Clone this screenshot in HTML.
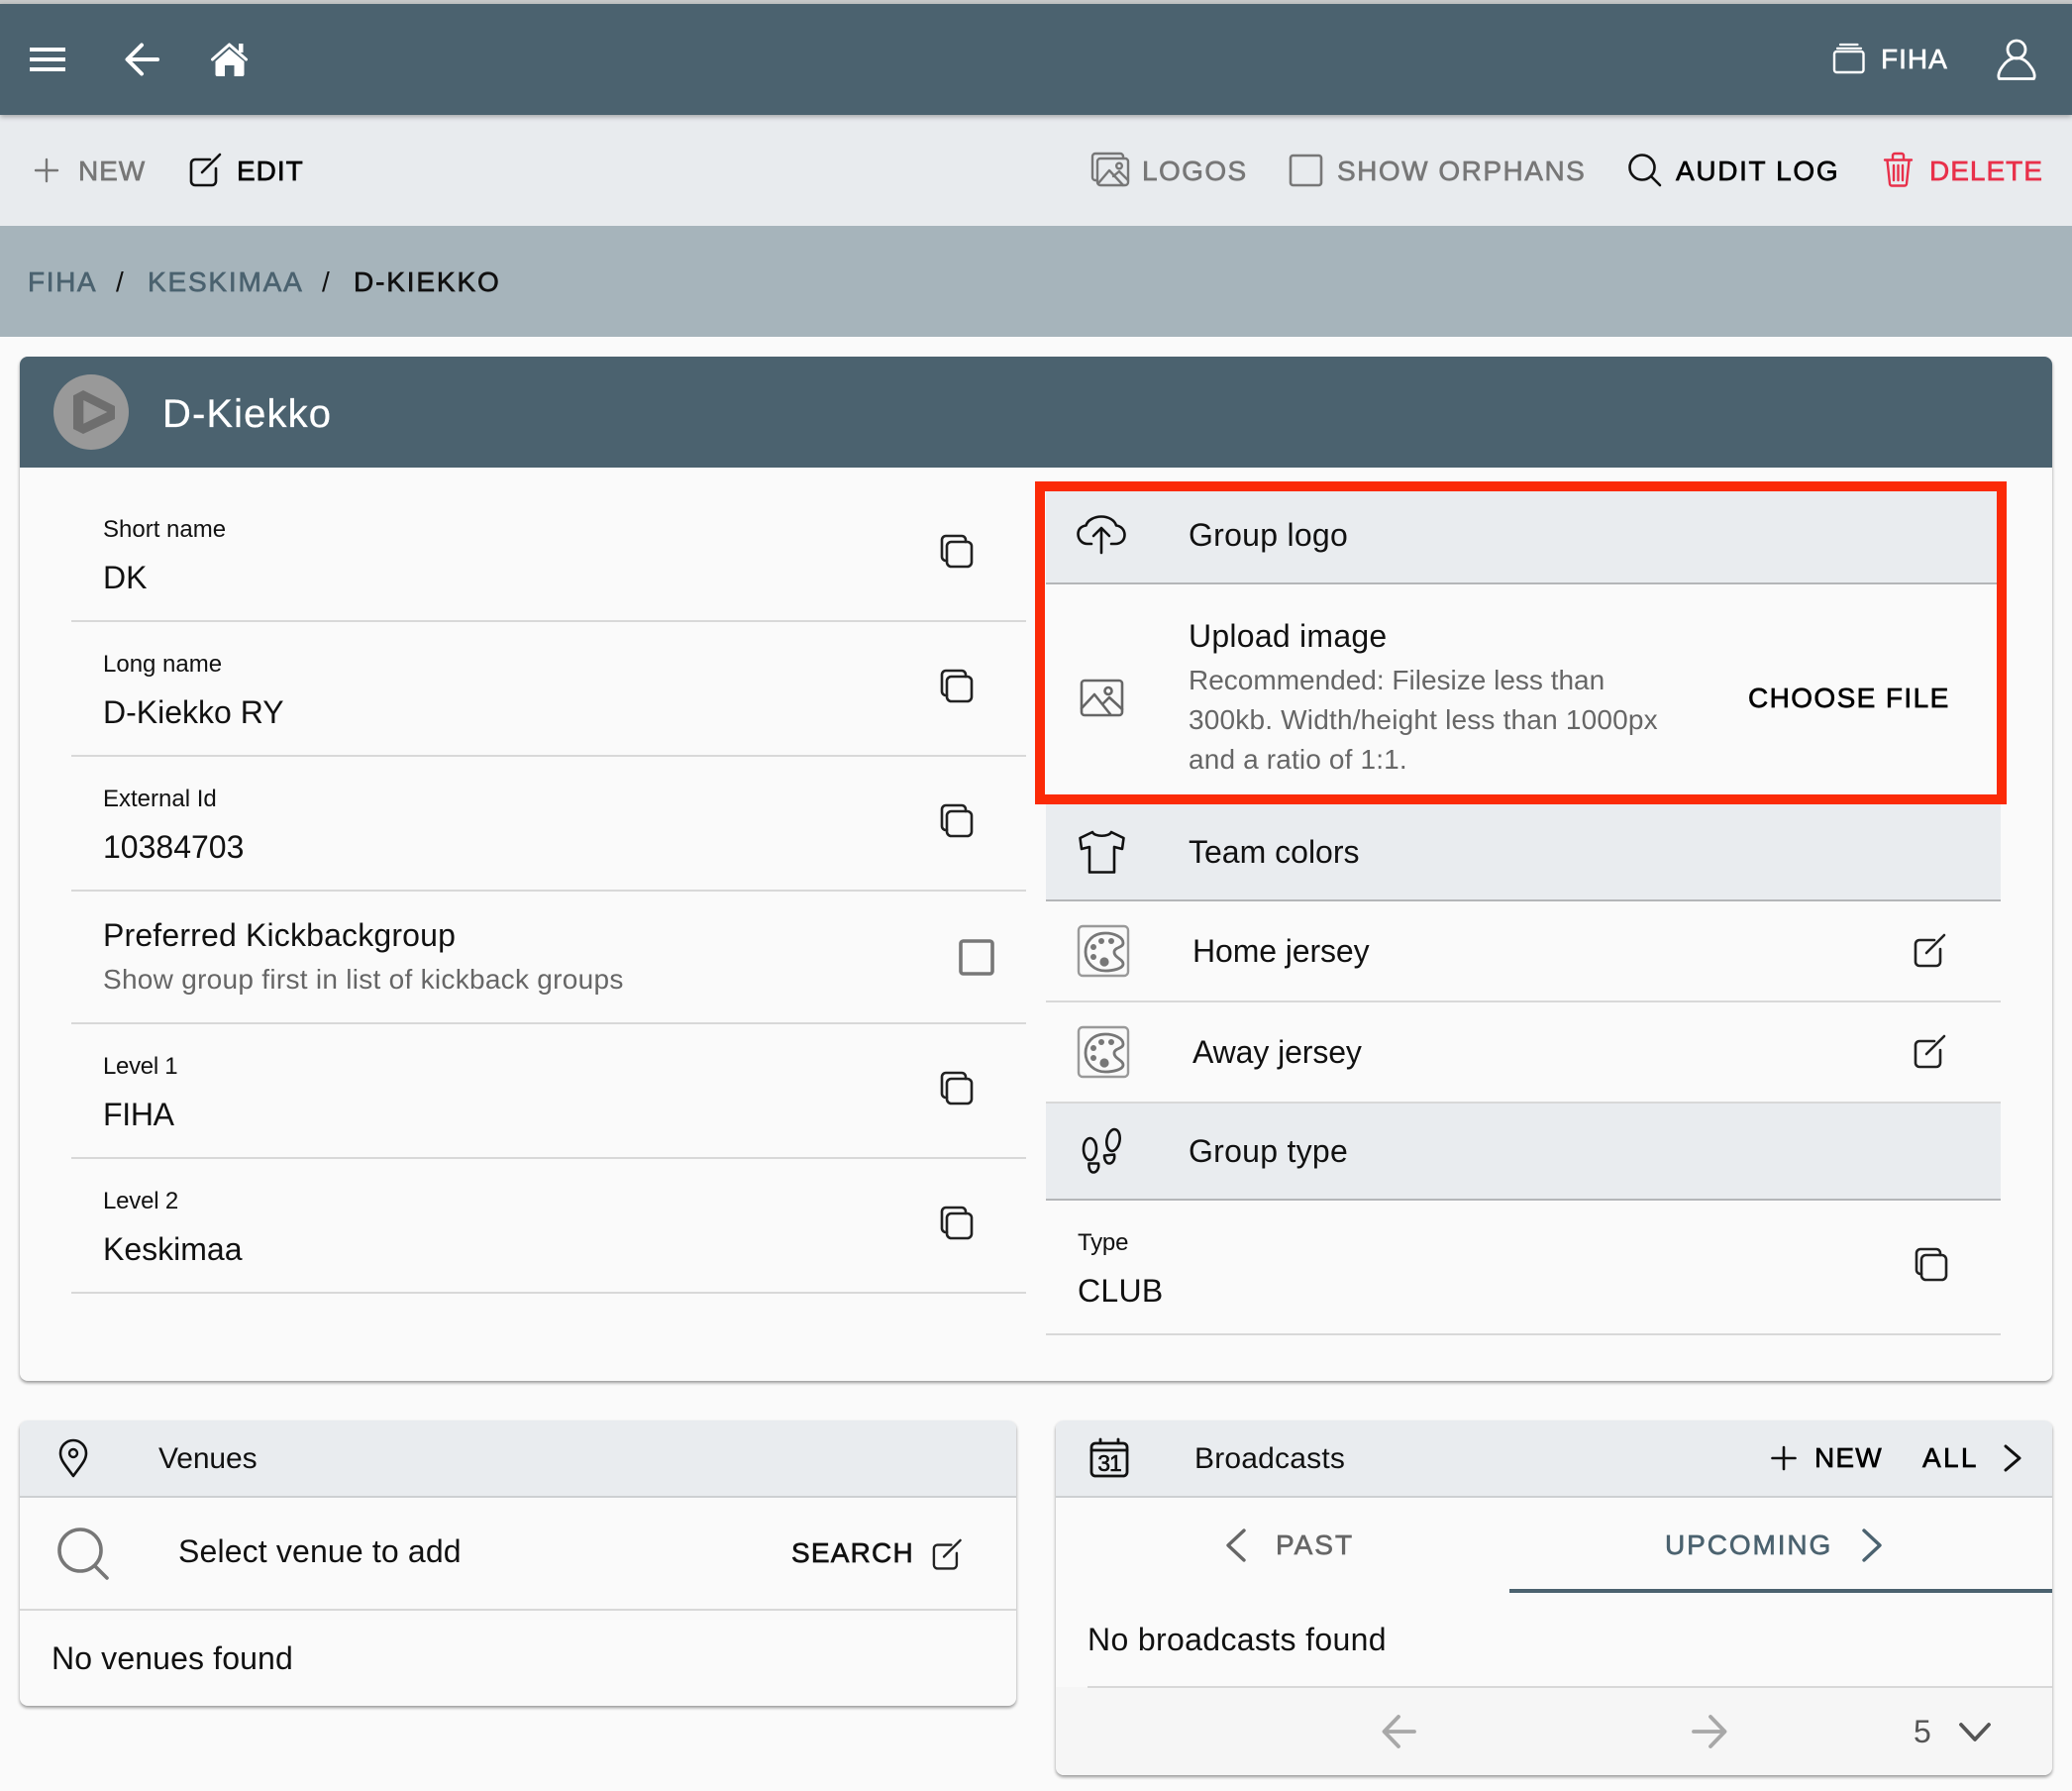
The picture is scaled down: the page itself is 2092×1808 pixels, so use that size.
<!DOCTYPE html>
<html><head><meta charset="utf-8"><style>
*{box-sizing:border-box}
html,body{margin:0;padding:0;width:2092px;height:1808px;overflow:hidden;background:#fafafa;font-family:"Liberation Sans",sans-serif;color:#111}
.b{position:absolute}
.t{position:absolute;white-space:nowrap;line-height:40px;height:40px;font-size:32px}
.s{font-size:24px}
.d{font-size:28px;color:#666}
.m{font-size:28px;letter-spacing:1.4px;-webkit-text-stroke:.65px currentColor}
.g{color:#777}
.l{position:absolute;height:2px;background:#d8d8d8}
.h{position:absolute;background:#e9ecef}
svg{position:absolute;left:0;top:0}
</style></head><body>
<div class="b" style="left:0;top:0;width:2092px;height:4px;background:#c6c8c8"></div>
<div class="b" style="left:0;top:116px;width:2092px;height:112px;background:#e8ebee"></div>
<div class="b" style="left:0;top:4px;width:2092px;height:112px;background:#4b626f;box-shadow:0 2px 5px rgba(0,0,0,.3)"></div>
<div class="b" style="left:0;top:228px;width:2092px;height:112px;background:#a6b4bb"></div>

<div class="b" style="left:20px;top:360px;width:2052px;height:1034px;background:#fafafa;border-radius:8px;box-shadow:0 2px 3px rgba(0,0,0,.4)"></div>
<div class="b" style="left:20px;top:360px;width:2052px;height:112px;background:#4b626f;border-radius:8px 8px 0 0"></div>

<div class="h" style="left:1056px;top:490px;width:964px;height:98px"></div><div class="l" style="left:1056px;top:588px;width:964px;background:#b4b6b8"></div>
<div class="h" style="left:1056px;top:812px;width:964px;height:96px"></div><div class="l" style="left:1056px;top:908px;width:964px;background:#b4b6b8"></div>
<div class="l" style="left:1056px;top:1010px;width:964px"></div>
<div class="h" style="left:1056px;top:1112px;width:964px;height:98px"></div><div class="l" style="left:1056px;top:1112px;width:964px"></div><div class="l" style="left:1056px;top:1210px;width:964px;background:#b4b6b8"></div>
<div class="l" style="left:1056px;top:1346px;width:964px"></div>
<div class="l" style="left:72px;top:626px;width:964px"></div>
<div class="l" style="left:72px;top:762px;width:964px"></div>
<div class="l" style="left:72px;top:898px;width:964px"></div>
<div class="l" style="left:72px;top:1032px;width:964px"></div>
<div class="l" style="left:72px;top:1168px;width:964px"></div>
<div class="l" style="left:72px;top:1304px;width:964px"></div>

<div class="b" style="left:1045px;top:486px;width:981px;height:326px;border:10px solid #fb2a07"></div>

<div class="b" style="left:20px;top:1434px;width:1006px;height:288px;background:#fafafa;border-radius:8px;box-shadow:0 2px 3px rgba(0,0,0,.4)"></div>
<div class="h" style="left:20px;top:1434px;width:1006px;height:77px;border-radius:8px 8px 0 0"></div><div class="l" style="left:20px;top:1510px;width:1006px;background:#cdd0d2"></div>
<div class="l" style="left:20px;top:1624px;width:1006px"></div>

<div class="b" style="left:1066px;top:1434px;width:1006px;height:358px;background:#fafafa;border-radius:8px;box-shadow:0 2px 3px rgba(0,0,0,.4)"></div>
<div class="h" style="left:1066px;top:1434px;width:1006px;height:77px;border-radius:8px 8px 0 0"></div><div class="l" style="left:1066px;top:1510px;width:1006px;background:#cdd0d2"></div>
<div class="b" style="left:1524px;top:1604px;width:548px;height:4px;background:#4b626f"></div>
<div class="b" style="left:1066px;top:1703px;width:1006px;height:89px;background:#f6f6f6;border-radius:0 0 8px 8px"></div>
<div class="l" style="left:1098px;top:1702px;width:974px"></div>

<div class="t m" style="left:1899px;top:40px;color:#fff;letter-spacing:1px">FIHA</div>
<div class="t m g" style="left:79px;top:153px;letter-spacing:.9px">NEW</div>
<div class="t m" style="left:239px;top:153px;color:#000;letter-spacing:1px">EDIT</div>
<div class="t m g" style="left:1153px;top:153px">LOGOS</div>
<div class="t m g" style="left:1350px;top:153px;letter-spacing:1.5px">SHOW ORPHANS</div>
<div class="t m" style="left:1692px;top:153px;color:#000;letter-spacing:1.65px">AUDIT LOG</div>
<div class="t m" style="left:1948px;top:153px;color:#e8304a;letter-spacing:1px">DELETE</div>

<div class="t m" style="left:28px;top:265px;color:#4b626f;letter-spacing:1.6px">FIHA</div>
<div class="t m" style="left:117px;top:265px;color:#111;-webkit-text-stroke:0">/</div>
<div class="t m" style="left:149px;top:265px;color:#4b626f;letter-spacing:1.8px">KESKIMAA</div>
<div class="t m" style="left:325px;top:265px;color:#111;-webkit-text-stroke:0">/</div>
<div class="t m" style="left:357px;top:265px;color:#111;letter-spacing:1.85px">D-KIEKKO</div>

<div class="t" style="left:164px;top:398px;font-size:40px;color:#fff;letter-spacing:1.1px;-webkit-text-stroke:.25px #fff">D-Kiekko</div>

<div class="t s" style="left:104px;top:515px">Short name</div><div class="t" style="left:104px;top:563px">DK</div>
<div class="t s" style="left:104px;top:651px">Long name</div><div class="t" style="left:104px;top:699px">D-Kiekko RY</div>
<div class="t s" style="left:104px;top:787px">External Id</div><div class="t" style="left:104px;top:835px">10384703</div>
<div class="t" style="left:104px;top:924px;letter-spacing:.17px">Preferred Kickbackgroup</div><div class="t d" style="left:104px;top:969px;letter-spacing:.28px">Show group first in list of kickback groups</div>
<div class="t s" style="left:104px;top:1057px;letter-spacing:-.3px">Level 1</div><div class="t" style="left:104px;top:1105px;letter-spacing:-.3px">FIHA</div>
<div class="t s" style="left:104px;top:1193px;letter-spacing:-.2px">Level 2</div><div class="t" style="left:104px;top:1241px">Keskimaa</div>

<div class="t" style="left:1200px;top:520px;letter-spacing:.27px">Group logo</div>
<div class="t" style="left:1200px;top:622px;letter-spacing:.25px">Upload image</div>
<div class="t d" style="left:1200px;top:667px">Recommended: Filesize less than</div>
<div class="t d" style="left:1200px;top:707px;letter-spacing:.19px">300kb. Width/height less than 1000px</div>
<div class="t d" style="left:1200px;top:747px;letter-spacing:.15px">and a ratio of 1:1.</div>
<div class="t m" style="left:1765px;top:685px;color:#000">CHOOSE FILE</div>
<div class="t" style="left:1200px;top:840px">Team colors</div>
<div class="t" style="left:1204px;top:940px;letter-spacing:-.1px">Home jersey</div>
<div class="t" style="left:1204px;top:1042px;letter-spacing:-.1px">Away jersey</div>
<div class="t" style="left:1200px;top:1142px;letter-spacing:.27px">Group type</div>
<div class="t s" style="left:1088px;top:1235px;letter-spacing:-.2px">Type</div><div class="t" style="left:1088px;top:1283px;letter-spacing:.3px">CLUB</div>

<div class="t" style="left:160px;top:1453px;font-size:30px;letter-spacing:-.1px">Venues</div>
<div class="t" style="left:180px;top:1546px;letter-spacing:.15px">Select venue to add</div>
<div class="t m" style="left:799px;top:1548px;color:#111;letter-spacing:1.2px">SEARCH</div>
<div class="t" style="left:52px;top:1654px;letter-spacing:.13px">No venues found</div>

<div class="t" style="left:1206px;top:1453px;font-size:30px;letter-spacing:.2px">Broadcasts</div>
<div class="t m" style="left:1832px;top:1452px;color:#000;letter-spacing:1.2px">NEW</div>
<div class="t m" style="left:1941px;top:1452px;color:#000;letter-spacing:2.3px">ALL</div>
<div class="t m" style="left:1288px;top:1540px;color:#666;letter-spacing:2px">PAST</div>
<div class="t m" style="left:1681px;top:1540px;color:#4b626f;letter-spacing:1.9px">UPCOMING</div>
<div class="t" style="left:1098px;top:1635px;letter-spacing:.35px">No broadcasts found</div>
<div class="t" style="left:1932px;top:1728px;color:#555">5</div>

<svg width="2092" height="1808" viewBox="0 0 2092 1808" fill="none" stroke-linecap="round" stroke-linejoin="round">
<defs>
<g id="copy" stroke-width="2.6"><rect x="6" y="7" width="25" height="25" rx="4.5"/><path d="M6 26H5a4 4 0 0 1-4-4V5a4 4 0 0 1 4-4h16a4 4 0 0 1 4 4v2"/></g>
<g id="edit" stroke-width="2.6"><path d="M20 6H5a4 4 0 0 0-4 4v18a4 4 0 0 0 4 4h17a4 4 0 0 0 4-4V15M12 19L30 1"/></g>
<g id="pal"><rect x="1" y="1" width="50" height="50" rx="4" stroke="#999" stroke-width="2.4"/><path d="M28 8C15 8 8 17 8 27C8 38 17 46 28 46C35 46 46 44 46 39C46 34 37 33 37 27C37 22 46 23 46 18C46 12 37 8 28 8Z" stroke="#777" stroke-width="2.8"/><g fill="#777"><circle cx="24" cy="16" r="3"/><circle cx="34" cy="16" r="3"/><circle cx="16" cy="22" r="3"/><circle cx="16" cy="32" r="3"/><circle cx="27" cy="37" r="4.6"/></g></g>
</defs>
<!-- header -->
<g fill="#fff"><rect x="30" y="48" width="36" height="4"/><rect x="30" y="58" width="36" height="4"/><rect x="30" y="68" width="36" height="4"/></g>
<path d="M159 60H129M143 45.5L128.5 60L143 74.5" stroke="#fff" stroke-width="4"/>
<path d="M231.500 49.500L246.500 62V75a2 2 0 0 1-2 2H236.500V66H227V77H219.500a2 2 0 0 1-2-2V62Z" fill="#fff"/>
<path d="M214.500 60L231.500 45L248.500 60" stroke="#fff" stroke-width="3"/><rect x="241" y="44" width="4.500" height="9" fill="#fff"/>
<rect x="1852" y="52" width="29.500" height="21" rx="2.500" stroke="#fff" stroke-width="2.400"/><path d="M1855 48.800H1879M1858 45H1875.500" stroke="#fff" stroke-width="2.200"/>
<circle cx="2036" cy="50" r="9" stroke="#fff" stroke-width="2.800"/><path d="M2018.500 79.500C2017 77 2018 72 2022 67C2026 61 2031 58.500 2036 58.500C2041 58.500 2046 61 2050 67C2054 72 2055 77 2053.500 79.500Z" stroke="#fff" stroke-width="2.800"/>
<!-- toolbar -->
<path d="M47 161V183M36 172H58" stroke="#777" stroke-width="2.400"/>
<use href="#edit" x="192" y="155" stroke="#111"/>
<g stroke="#777" stroke-width="2.400"><rect x="1108" y="160" width="31" height="27" rx="3"/><path d="M1108 182H1106a3 3 0 0 1-3-3V158a3 3 0 0 1 3-3H1131a3 3 0 0 1 3 3V160"/><circle cx="1130" cy="167.500" r="2.800"/><path d="M1109 185L1120 172L1134 187M1124 178L1130 173L1139 182"/></g>
<rect x="1303" y="157" width="31" height="30" rx="2.500" stroke="#777" stroke-width="2.600"/>
<circle cx="1658" cy="169" r="12.500" stroke="#111" stroke-width="2.600"/><path d="M1667 178L1676 187" stroke="#111" stroke-width="2.600"/>
<g stroke="#e8304a" stroke-width="2.400"><path d="M1903 161.500H1930M1911 161V157a2 2 0 0 1 2-2h7a2 2 0 0 1 2 2v4M1905.500 162L1908 185.500a2 2 0 0 0 2 2H1923a2 2 0 0 0 2-2L1927.500 162M1912 167V182M1916.500 167V182M1921 167V182"/></g>
<!-- avatar -->
<circle cx="92" cy="416" r="38" fill="#999"/>
<path d="M74 399.300L84 394L116 410V423L84 438L74 433Z" fill="#6e6e6e"/><path d="M84.300 404L108.300 416L84.300 427.700Z" fill="#999"/>
<!-- copy icons -->
<use href="#copy" x="950" y="540" stroke="#222"/><use href="#copy" x="950" y="676" stroke="#222"/><use href="#copy" x="950" y="812" stroke="#222"/><use href="#copy" x="950" y="1082" stroke="#222"/><use href="#copy" x="950" y="1218" stroke="#222"/><use href="#copy" x="1934" y="1260" stroke="#222"/>
<rect x="970" y="950" width="32" height="33" rx="2.500" stroke="#777" stroke-width="3.600"/>
<!-- right column -->
<g stroke="#111" stroke-width="2.600"><path d="M1102 549H1098C1092 549 1088.500 544 1088.500 539C1088.500 534 1092 531 1096.500 530.500C1098 525 1105 521.500 1112 521.500C1119 521.500 1125.500 525 1127 530.500C1132 531 1135.500 535 1135.500 540C1135.500 545 1132 549 1126 549H1122"/><path d="M1112 558V534M1104 541L1112 533L1120 541"/></g>
<g stroke="#666" stroke-width="2.600"><rect x="1092" y="687" width="41" height="35" rx="3"/><circle cx="1119" cy="697.500" r="3.500"/><path d="M1092 715L1105 701L1121 721M1113 711L1120 704L1133 716"/></g>
<path d="M1103 840C1105 845 1120 845 1122 840L1134.500 846L1133 857L1125 855V880.500H1100V855L1092 857L1090.500 846Z" stroke="#111" stroke-width="2.600"/>
<use href="#pal" x="1088" y="934"/><use href="#pal" x="1088" y="1036"/>
<use href="#edit" x="1933" y="943" stroke="#222"/><use href="#edit" x="1933" y="1045" stroke="#222"/>
<g stroke="#111" stroke-width="2.600"><ellipse cx="1100.500" cy="1160" rx="6.500" ry="11"/><path d="M1099.500 1174.500H1109C1110 1180 1107 1183.500 1104 1183.500C1101 1183.500 1099 1180 1099.500 1174.500Z"/><ellipse cx="1124" cy="1151" rx="6.500" ry="11" transform="rotate(10 1124 1151)"/><path d="M1115 1166.500L1125 1165.500C1126 1171 1123 1174.500 1120 1174.500C1117 1174.500 1115 1171 1115 1166.500Z"/></g>
<!-- venues -->
<path d="M74 1490C66 1479 61 1474 61 1467A13 13 0 0 1 87 1467C87 1474 82 1479 74 1490Z" stroke="#111" stroke-width="2.600"/><circle cx="74" cy="1467" r="4" stroke="#111" stroke-width="2.400"/>
<circle cx="81" cy="1565" r="21" stroke="#777" stroke-width="3.600"/><path d="M96 1581L108 1593" stroke="#777" stroke-width="3.600"/>
<use href="#edit" transform="translate(942 1554) scale(.92)" stroke="#222"/>
<!-- broadcasts -->
<rect x="1102" y="1457" width="36" height="33" rx="4" stroke="#111" stroke-width="2.800"/><path d="M1102 1464H1138M1111 1453V1457M1129 1453V1457" stroke="#111" stroke-width="2.800"/>
<text x="1120" y="1485" font-family="Liberation Sans" font-size="23" letter-spacing="-1" fill="#111" stroke="#111" stroke-width=".6" text-anchor="middle">31</text>
<path d="M1801 1461V1483M1789.500 1472H1812.500" stroke="#111" stroke-width="2.600"/>
<path d="M2025 1460L2039 1472L2025 1484" stroke="#111" stroke-width="3"/>
<path d="M1256 1545L1240 1560L1256 1575" stroke="#666" stroke-width="3.400"/>
<path d="M1882 1545L1898 1560L1882 1575" stroke="#4b626f" stroke-width="3.400"/>
<path d="M1428 1748H1398M1412 1733L1397.500 1748L1412 1763" stroke="#a8a8a8" stroke-width="3.800"/>
<path d="M1710 1748H1741M1727 1733L1741.500 1748L1727 1763" stroke="#a8a8a8" stroke-width="3.800"/>
<path d="M1980 1741L1994 1756L2008 1741" stroke="#555" stroke-width="3.800"/>
</svg>
</body></html>
